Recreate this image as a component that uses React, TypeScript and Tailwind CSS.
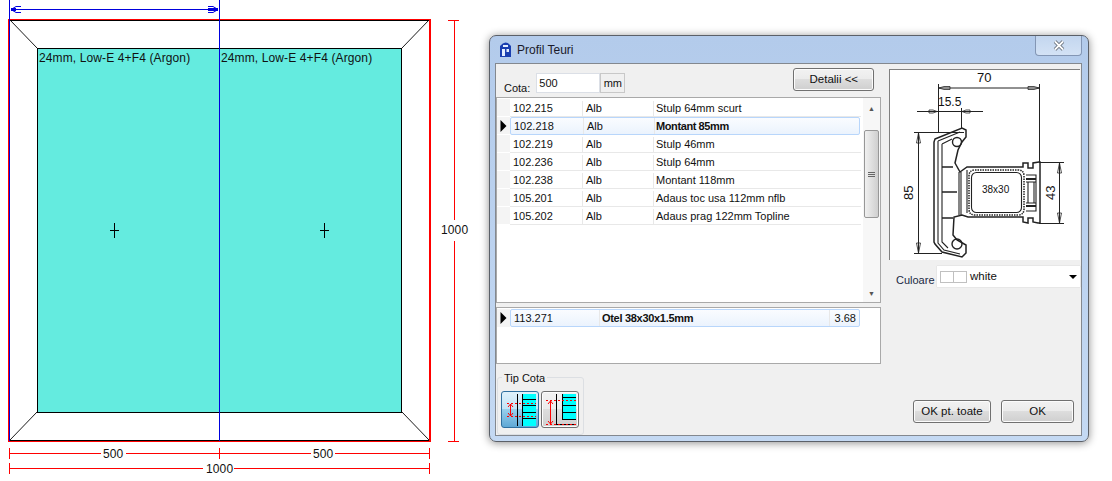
const rows = [
  ["102.215", "Alb", "Stulp 64mm scurt"],
  ["102.218", "Alb", "Montant 85mm"],
  ["102.219", "Alb", "Stulp 46mm"],
  ["102.236", "Alb", "Stulp 64mm"],
  ["102.238", "Alb", "Montant 118mm"],
  ["105.201", "Alb", "Adaus toc usa 112mm nflb"],
  ["105.202", "Alb", "Adaus prag 122mm Topline"],
];

function Arrow() {
  return (
    <svg width="7" height="12" viewBox="0 0 7 12" className="shrink-0">
      <path d="M0.5 0 L6.5 6 L0.5 12 Z" fill="#000" />
    </svg>
  );
}

function Drawing() {
  const txt = { fontFamily: "'Liberation Sans', sans-serif", fontSize: 12, fill: "#111", letterSpacing: 0.12 };
  return (
    <svg width="489" height="481" viewBox="0 0 489 481" className="shrink-0" shapeRendering="crispEdges">
      <rect x="37.5" y="48.5" width="364" height="364" fill="#64ebdf" stroke="#000" />
      <g shapeRendering="auto" stroke="#000" strokeWidth="0.9">
        <path d="M10 20 L37 48 M429 20 L402 48 M10 440 L37 412 M429 440 L402 412" />
      </g>
      <path d="M9 20.5 H430 M9 440.5 H430" stroke="#000" />
      <path d="M8 19.5 H431 M8 441.5 H431 M8.5 19 V442 M429.5 19 V442 M430.5 19 V442" stroke="#f00" />
      <path d="M9.5 0 V441 M219.5 0 V441" stroke="#00d" />
      <path d="M11 9.5 H218" stroke="#00d" />
      <path d="M11 9.5 H16 M208 9.5 H218" stroke="#00d" strokeWidth="3" />
      <g shapeRendering="auto" fill="none" stroke="#00d" strokeWidth="1">
        <path d="M11 9.5 L16 6.5 H21 M11 9.5 L16 12.5 H21 M218 9.5 L213 6.5 H208 M218 9.5 L213 12.5 H208" />
      </g>
      <path d="M114.5 223 V238 M110 230.5 H119 M324.5 223 V238 M320 230.5 H329" stroke="#000" />
      <path d="M448 20.5 H459 M454.5 20 V220 M454.5 241 V441 M448 441.5 H459" stroke="#f00" />
      <path d="M9.5 448 V459 M219.5 448 V459 M429.5 448 V459 M9.5 453.5 H101 M126 453.5 H311 M335 453.5 H430" stroke="#f00" />
      <path d="M9.5 463 V474 M429.5 463 V474 M9.5 468.5 H203 M234 468.5 H430" stroke="#f00" />
      <text x="39" y="62" style={txt}>24mm, Low-E 4+F4 (Argon)</text>
      <text x="221" y="62" style={txt}>24mm, Low-E 4+F4 (Argon)</text>
      <text x="441" y="234" style={txt}>1000</text>
      <text x="103" y="458" style={txt}>500</text>
      <text x="313" y="458" style={txt}>500</text>
      <text x="206" y="473" style={txt}>1000</text>
    </svg>
  );
}

function Section() {
  const t = { fontFamily: "'Liberation Sans', sans-serif", fill: "#111" };
  return (
    <svg width="190" height="190" viewBox="890 70 190 190" className="block">
      <g fill="none" stroke="#222" strokeWidth="1">
        <path d="M938.5 84 V132 M1039.5 84 V162 M938.5 88 H1039.5 M917 111.5 H983 M961.5 108 V128 M914 132.5 H964 M914 253.5 H942 M918.5 133 V253 M1039 162.5 H1064 M1039 223.5 H1064 M1059.5 163 V223" />
        <path d="M939 88 L944 86.5 H950 V89.5 H944 Z M1039 88 L1034 86.5 H1028 V89.5 H1034 Z M937 111.5 L933 110 H929 V113 H933 Z M962 111.5 L966 110 H970 V113 H966 Z" strokeWidth="0.8" />
        <path d="M918.5 133 L916.5 143 H920.5 Z M918.5 253 L916.5 243 H920.5 Z M1059.5 163 L1057.5 173 H1061.5 Z M1059.5 223 L1057.5 213 H1061.5 Z" strokeWidth="0.8" />
        <path strokeWidth="1.5" d="M935 139 L962 128 L966 130 V137 L962 142 L958 150 L955 163 L960 172 L967 167 H1023 V163 H1028 V168 H1033 V163 L1039 162 H1040 V223 H1038 L1033 222 V218 H1028 V223 L1023 222 V217 H968 L962 215 L954 217 L953 235 L957 240 L966 245 V253 L962 257 L942 252 L935 244 L934 242 V142 Z" />
        <circle cx="957" cy="142" r="4.5" strokeWidth="1.4" />
        <circle cx="957" cy="244" r="5" strokeWidth="1.4" />
        <path strokeWidth="1.1" d="M938 141 L960 132 M938 141 V243 L944 250 L960 254 M942 144 L952 139 M942 144 V242 L948 248 M959 172 V215 M961 172 V215 M967 170 V213" />
        <path strokeWidth="1.5" d="M942 167 H953 M942 192 H957 M942 218 H953" />
        <path strokeWidth="1.5" strokeDasharray="1.5 1" d="M975 170 H1018 Q1024 170 1024 176 V209 Q1024 215 1018 215 H975 Q969 215 969 209 V176 Q969 170 975 170 Z" />
        <rect x="971.5" y="172.5" width="50" height="40" rx="5" strokeWidth="1.1" />
        <path strokeWidth="1.1" d="M1026 175 H1036 V211 H1026 M1026 182 H1036 M1026 203 H1036 M1028 182 V203 M1034 182 V203" />
        <path strokeWidth="1.8" d="M1026 179 H1036 M1026 206 H1036" />
      </g>
      <text x="977" y="82" fontSize="13" style={t}>70</text>
      <text x="938" y="106" fontSize="12" style={t}>15.5</text>
      <text x="982" y="193" fontSize="10" style={t}>38x30</text>
      <text transform="translate(913 200) rotate(-90)" fontSize="13" style={t}>85</text>
      <text transform="translate(1055 200) rotate(-90)" fontSize="13" style={t}>43</text>
    </svg>
  );
}

function TipIcon1() {
  return (
    <svg width="35" height="35" viewBox="0 0 35 35" shapeRendering="crispEdges">
      <path d="M20 2 H33 V34 H20 Z" fill="#00ffff" />
      <path d="M14.5 2 V34 M19.5 2 V34 M20 7.5 H33 M20 13.5 H33 M20 20.5 H33 M20 26.5 H33" stroke="#000" fill="none" />
      <path d="M4 11.5 H33 M4 24.5 H33" stroke="#f00" strokeDasharray="2 2" fill="none" />
      <path d="M7.5 12 V24" stroke="#f00" fill="none" />
      <path d="M5 15 L7.5 12 L10 15 M5 21 L7.5 24 L10 21" stroke="#f00" fill="none" shapeRendering="auto" />
    </svg>
  );
}

function TipIcon2() {
  return (
    <svg width="35" height="35" viewBox="0 0 35 35" shapeRendering="crispEdges">
      <path d="M20 2 H33 V28 H20 Z" fill="#00ffff" />
      <path d="M13.5 2 V32.5 H33 M19.5 2 V28 M20 5.5 H33 M20 13.5 H33 M20 20.5 H33 M20 27.5 H33" stroke="#000" fill="none" />
      <path d="M3 8.5 H33 M3 32.5 H33" stroke="#f00" strokeDasharray="2 2" fill="none" />
      <path d="M7.5 9 V32" stroke="#f00" fill="none" />
      <path d="M5 12 L7.5 9 L10 12 M5 29 L7.5 32 L10 29" stroke="#f00" fill="none" shapeRendering="auto" />
    </svg>
  );
}

function GridRow({ r, active }: { r: string[]; active: boolean }) {
  return (
    <div className="flex h-[18px] items-stretch">
      <div className="flex w-[13px] shrink-0 items-center justify-center border-b border-white bg-[#f4f4f4]">
        {active && <Arrow />}
      </div>
      <div
        className={
          active
            ? "flex w-[350px] rounded-[2px] border border-[#b8d6fb] bg-gradient-to-b from-[#fafcff] to-[#ebf3fd]"
            : "flex w-[351px] border-b border-[#e8e8e8] pt-[2px]"
        }
      >
        <div className="flex w-[73px] items-center border-r border-[#e8e8e8] pl-[3px]">{r[0]}</div>
        <div className="flex w-[71px] items-center border-r border-[#e8e8e8] pl-[3px]">{r[1]}</div>
        <div className={active ? "flex flex-1 items-center pl-[1px] font-bold tracking-[-0.4px]" : "flex flex-1 items-center pl-[2px]"}>{r[2]}</div>
      </div>
    </div>
  );
}

function Scrollbar() {
  return (
    <div className="flex w-[17px] shrink-0 flex-col items-center bg-[#f7f7f7]">
      <div className="flex h-[20px] items-center text-[7px] leading-none text-[#555]">▲</div>
      <div className="mt-[12px] flex h-[88px] w-[15px] flex-col items-center justify-center gap-[1px] rounded-[2px] border border-[#979797] bg-gradient-to-r from-[#f0f0f0] to-[#cfcfcf]">
        <div className="h-px w-[7px] bg-[#666]" />
        <div className="h-px w-[7px] bg-[#666]" />
        <div className="h-px w-[7px] bg-[#666]" />
      </div>
      <div className="flex-1" />
      <div className="flex h-[17px] items-center text-[7px] leading-none text-[#555]">▼</div>
    </div>
  );
}

const btn =
  "flex items-center justify-center rounded-[3px] border border-[#707070] bg-[linear-gradient(#f2f2f2_0%,#ebebeb_48%,#dddddd_50%,#cfcfcf_100%)] shadow-[inset_0_0_0_1px_#fcfcfc]";

export default function App() {
  return (
    <div className="flex h-[481px] w-[1112px] overflow-hidden bg-white font-['Liberation_Sans',sans-serif] text-[11px] leading-none text-[#111]">
      <Drawing />
      <div className="mt-[35px] h-[407px] w-[600px] shrink-0 rounded-[7px] border border-[#5b6068] bg-gradient-to-b from-[#b3cbeb] to-[#c4d9f3] pl-[5px] pr-[6px] shadow-[0_1px_8px_rgba(0,0,0,0.45)]">
        <div className="flex h-[27px] items-center">
          <svg width="11" height="15" viewBox="0 0 11 15" className="ml-[5px]">
            <path d="M0 15 V4 Q5.5 -3 11 4 V15 Z" fill="#1a3fb0" />
            <path d="M2 7 H5 V14 H2 Z M6.5 7 H9 V10 H6.5 Z M3 3 H8 V5 H3 Z" fill="#e4eeff" />
          </svg>
          <span className="ml-[6px] text-[12px] text-[#1a1a2a]">Profil Teuri</span>
          <div className="flex-1" />
          <div className="flex h-[20px] w-[47px] items-center justify-center self-start rounded-b-[4px] border border-t-0 border-[#8396b4] bg-gradient-to-b from-[#c3d6ef] to-[#d3e2f5]">
            <svg width="12" height="11" viewBox="0 0 12 11">
              <path d="M2 1.5 L10 9.5 M10 1.5 L2 9.5" stroke="#59616b" strokeWidth="3.4" />
              <path d="M2 1.5 L10 9.5 M10 1.5 L2 9.5" stroke="#ffffff" strokeWidth="1.8" />
            </svg>
          </div>
        </div>
        <div className="flex h-[373px] border border-[#83888f] bg-[#f0f0f0]">
          <div className="flex w-[386px] shrink-0 flex-col">
            <div className="flex h-[33px] shrink-0 items-start">
              <span className="ml-[8px] mt-[19px] text-[11px]">Cota:</span>
              <div className="ml-[6px] mt-[9px] flex h-[20px] w-[64px] items-center border border-[#dbdfe6] bg-white pl-[2px]">500</div>
              <div className="mt-[9px] flex h-[20px] w-[25px] items-center justify-center border border-[#c8c8c8] bg-[#f0f0f0]">mm</div>
              <div className={btn + " ml-[168px] mt-[4px] h-[23px] w-[81px] text-[11.5px]"}>Detalii &lt;&lt;</div>
            </div>
            <div className="flex h-[206px] w-[385px] shrink-0 justify-between border border-[#a9a9a9] bg-white">
              <div className="w-[364px] pt-px">
                {rows.map((r) => (
                  <GridRow key={r[0]} r={r} active={r[0] === "102.218"} />
                ))}
              </div>
              <Scrollbar />
            </div>
            <div className="mt-[4px] h-[57px] w-[385px] shrink-0 border border-[#a9a9a9] bg-white pt-px">
              <div className="flex h-[18px] items-stretch">
                <div className="flex w-[13px] shrink-0 items-center justify-center bg-[#f4f4f4]">
                  <Arrow />
                </div>
                <div className="flex w-[350px] rounded-[2px] border border-[#b8d6fb] bg-gradient-to-b from-[#fafcff] to-[#ebf3fd]">
                  <div className="flex w-[89px] items-center border-r border-[#e8e8e8] pl-[3px]">113.271</div>
                  <div className="flex w-[230px] items-center border-r border-[#e8e8e8] pl-[2px] font-bold tracking-[-0.3px]">Otel 38x30x1.5mm</div>
                  <div className="flex flex-1 items-center justify-end pr-[3px]">3.68</div>
                </div>
              </div>
            </div>
            <div className="relative ml-[1px] mt-[13px] flex h-[58px] w-[87px] items-start gap-[2px] rounded-[3px] border border-[#dcdfe3] pl-[3px] pt-[13px]">
              <span className="absolute left-[4px] top-[-5px] bg-[#f0f0f0] px-[2px] text-[11px]">Tip Cota</span>
              <div className="flex h-[37px] w-[38px] items-center justify-center rounded-[3px] border border-[#2f6f9f] bg-[linear-gradient(#dff1fb_0%,#c3e4f6_48%,#98cfec_50%,#5fa8d5_100%)]">
                <TipIcon1 />
              </div>
              <div className={btn + " h-[37px] w-[38px]"}>
                <TipIcon2 />
              </div>
            </div>
          </div>
          <div className="ml-[7px] flex flex-1 flex-col">
            <div className="mt-[5px] h-[191px] w-[191px] border-l border-t border-[#808080] bg-white">
              <Section />
            </div>
            <div className="mt-[6px] flex h-[21px] items-center">
              <span className="ml-[7px] mt-[7px] w-[41px] text-[#1a2a44]">Culoare</span>
              <div className="flex h-[21px] w-[143px] items-center bg-white pl-[3px] shadow-[0_0_1px_#bbb]">
                <div className="flex h-[12px] w-[27px] border border-[#c0c0c0]">
                  <div className="w-1/2 border-r border-[#c0c0c0]" />
                </div>
                <span className="ml-[3px] text-[11.5px]">white</span>
                <div className="flex-1" />
                <svg width="8" height="4" viewBox="0 0 8 4" className="mr-[3px]">
                  <path d="M0 0 H8 L4 4 Z" fill="#000" />
                </svg>
              </div>
            </div>
            <div className="flex-1" />
            <div className="mb-[12px] flex">
              <div className={btn + " ml-[24px] h-[23px] w-[78px] text-[11.5px]"}>OK pt. toate</div>
              <div className={btn + " ml-[10px] h-[23px] w-[73px] text-[11.5px]"}>OK</div>
            </div>
          </div>
        </div>
      </div>
    </div>
  );
}
